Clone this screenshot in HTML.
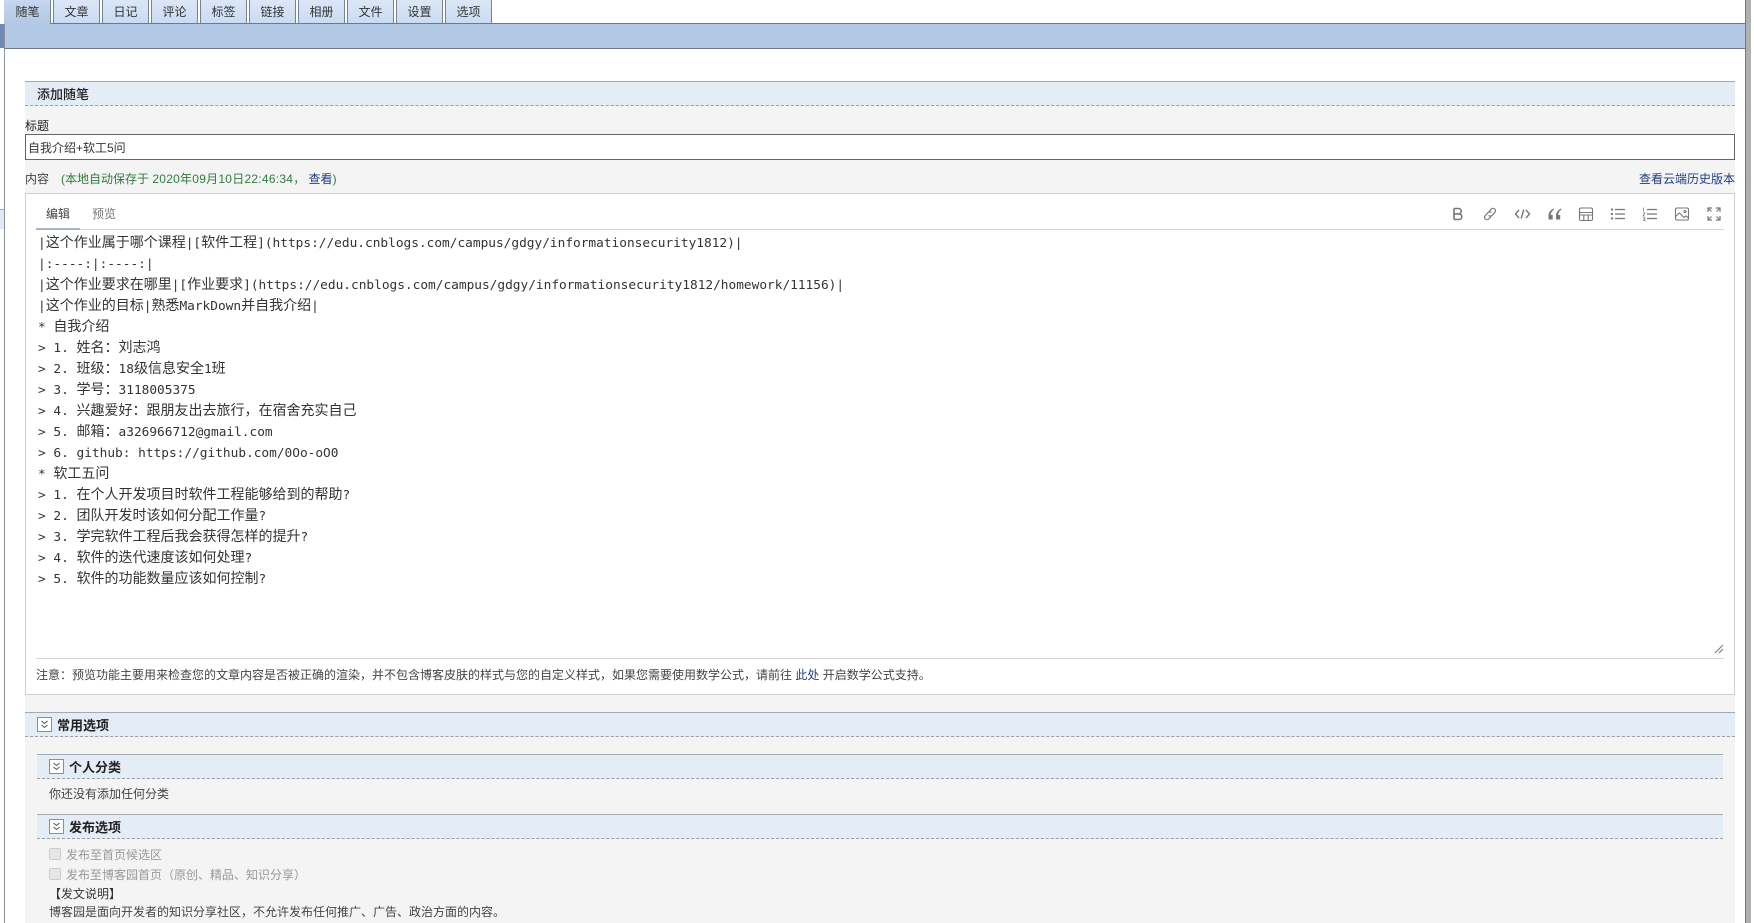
<!DOCTYPE html>
<html lang="zh"><head><meta charset="utf-8"><title>添加随笔</title>
<style>
html,body{margin:0;padding:0;background:#fff;width:1754px;height:923px;overflow:hidden}
body{position:relative;font-family:"Liberation Sans","Noto Sans CJK SC",sans-serif;font-size:12px;color:#333}
.a{position:absolute}
.t{position:absolute;white-space:nowrap;line-height:18px}
.tab{position:absolute;top:0;height:23px;width:45px;background:linear-gradient(#dbe7f7,#cadcf3);border:solid #78838f;border-width:0 1px;text-align:center;line-height:24px;font-size:12px;color:#333;box-sizing:content-box}
.hd{position:absolute;background:#e4ecf6;border-top:1px solid #a3aab2;border-bottom:1px dashed #9aa0a6;box-sizing:border-box}
.ht{position:absolute;font-size:13px;font-weight:500;color:#222;white-space:nowrap;line-height:18px}
.ck{position:absolute;width:15px;height:15px;border:1px solid #8a8f95;background:#fff;box-sizing:border-box}
.ck svg{position:absolute;left:2px;top:2px}
.c{position:absolute;left:38px;white-space:pre;font-size:14px;line-height:21px;height:21px;color:#333}
.c i{font-style:normal;font-family:"DejaVu Sans Mono",monospace;font-size:12.8px}
.cb{position:absolute;left:49px;width:12px;height:12px;background:#e6e6e6;border:1px solid #ccc;border-radius:2px;box-sizing:border-box}
.ic{position:absolute;top:207px}
</style></head><body>
<div class="a" style="left:0;top:24px;width:4px;height:24px;background:#6c8ab5"></div>
<div class="a" style="left:0;top:209px;width:4px;height:20px;background:#dfe8f5;border-top:1px solid #9aa;box-sizing:border-box"></div>
<div class="a" style="left:4px;top:23px;width:1px;height:900px;background:#8d9297"></div>
<div class="a" style="left:5px;top:23px;width:1740px;height:26px;background:#b3c8e5;border-top:1px solid #6f7a86;border-bottom:1px solid #6f7a86;box-sizing:border-box"></div>
<div class="a" style="left:1745px;top:0;width:6px;height:923px;background:#b0b0b0;border-left:1px solid #777;box-sizing:border-box"></div>
<div class="tab" style="left:4px;height:24px;background:linear-gradient(#c6d7ee,#b3c8e5);border-left:0;border-bottom:0;width:45px;text-align:center;z-index:2;padding-left:1px">随笔</div>
<div class="tab" style="left:53px">文章</div>
<div class="tab" style="left:102px">日记</div>
<div class="tab" style="left:151px">评论</div>
<div class="tab" style="left:200px">标签</div>
<div class="tab" style="left:249px">链接</div>
<div class="tab" style="left:298px">相册</div>
<div class="tab" style="left:347px">文件</div>
<div class="tab" style="left:396px">设置</div>
<div class="tab" style="left:445px">选项</div>

<div class="a" style="left:25px;top:105px;width:1710px;height:818px;background:#f4f4f4"></div>
<div class="hd" style="left:25px;top:81px;width:1710px;height:25px"></div>
<div class="ht" style="left:37px;top:85px;margin-top:1px">添加随笔</div>
<div class="t" style="left:25px;top:117px;color:#222">标题</div>
<div class="a" style="left:25px;top:134px;width:1710px;height:26px;background:#fff;border:1px solid #666;box-sizing:border-box"></div>
<div class="t" style="left:28px;top:138px;margin-top:1px;color:#333">自我介绍+软工5问</div>
<div class="t" style="left:25px;top:170px;color:#444">内容</div>
<div class="t" style="left:61px;top:170px;color:#2f7d3a">(本地自动保存于 <span style="letter-spacing:.25px">2020年09月10日22:46:34</span>， <span style="color:#1f3f7f">查看</span>)</div>
<div class="t" style="right:19px;top:170px;color:#1f3f7f">查看云端历史版本</div>

<div class="a" style="left:25px;top:193px;width:1710px;height:502px;background:#fff;border:1px solid #d0d0d0;box-sizing:border-box"></div>
<div class="t" style="left:46px;top:205px;color:#444">编辑</div>
<div class="t" style="left:92px;top:205px;color:#777">预览</div>
<div class="a" style="left:36px;top:229px;width:1688px;height:1px;background:#d4d4d4"></div>
<div class="a" style="left:36px;top:228px;width:44px;height:2px;background:#a7b4c6"></div>

<svg class="ic" style="left:1451px;top:206px" width="14" height="16" viewBox="0 0 14 16" fill="none" stroke="#777" stroke-width="1.6"><path d="M3 2.5v11M3 2.5h4.5a2.6 2.6 0 0 1 0 5.4H3M3 7.9h5a2.8 2.8 0 0 1 0 5.6H3"/></svg>
<svg class="ic" style="left:1482px;top:206px" width="16" height="16" viewBox="0 0 16 16" fill="none" stroke="#777" stroke-width="1.2"><path d="M7 5.5l2.2-2.4a2.4 2.4 0 0 1 3.6 3.3L10 9.4a2.4 2.4 0 0 1-3.4 0M9 10.5l-2.2 2.4a2.4 2.4 0 0 1-3.6-3.3L6 6.6a2.4 2.4 0 0 1 3.4 0"/></svg>
<svg class="ic" style="left:1514px;top:206px" width="17" height="16" viewBox="0 0 17 16" fill="none" stroke="#777" stroke-width="1.4"><path d="M5 4L1.5 8 5 12M12 4l3.5 4L12 12M9.8 3.5L7.2 12.5"/></svg>
<svg class="ic" style="left:1547px;top:206px" width="16" height="16" viewBox="0 0 16 16" fill="#777"><path d="M6.5 2.5C3.5 4 1.5 6.5 1.5 9.5v4h4.2V9H3.6c.2-2.2 1.4-4.2 3.4-5.5zM14 2.5C11 4 9 6.5 9 9.5v4h4.2V9h-2.1c.2-2.2 1.4-4.2 3.4-5.5z"/></svg>
<svg class="ic" style="left:1578px;top:206px" width="16" height="16" viewBox="0 0 16 16" fill="none" stroke="#777" stroke-width="1.1"><rect x="1.5" y="2" width="13" height="12.5" rx="1.5"/><path d="M1.5 6.5h13M1.5 9h13M5.8 9v5.5M10.2 9v5.5"/></svg>
<svg class="ic" style="left:1610px;top:206px" width="16" height="16" viewBox="0 0 16 16" fill="none" stroke="#777" stroke-width="1.2"><path d="M5 3.5h10M5 8h10M5 12.5h10"/><path d="M1 3.5h2M1 8h2M1 12.5h2" stroke-width="2"/></svg>
<svg class="ic" style="left:1642px;top:206px" width="16" height="16" viewBox="0 0 16 16" fill="none" stroke="#777" stroke-width="1.2"><path d="M5 3.5h10M5 8h10M5 12.5h10"/><path d="M1.5 1.5v4M1 7h2l-2 3h2M1 12h2l-1 1 1 1.5H1" stroke-width=".7"/></svg>
<svg class="ic" style="left:1674px;top:206px" width="16" height="16" viewBox="0 0 16 16" fill="none" stroke="#777" stroke-width="1.1"><rect x="1.5" y="2" width="13" height="12" rx="1.5"/><path d="M1.5 10.5L5.5 7l4.5 4.5 2-1.5 2.5 2"/><circle cx="11" cy="5.5" r="1"/></svg>
<svg class="ic" style="left:1706px;top:206px" width="16" height="16" viewBox="0 0 16 16" fill="none" stroke="#777" stroke-width="1.2"><path d="M2 6V2h4M10 2h4v4M14 10v4h-4M6 14H2v-4M2.5 2.5l3 3M13.5 2.5l-3 3M13.5 13.5l-3-3M2.5 13.5l3-3"/></svg>

<div class="c" style="top:232px"><i>|</i>这个作业属于哪个课程<i>|[</i>软件工程<i>](https://edu.cnblogs.com/campus/gdgy/informationsecurity1812)|</i></div>
<div class="c" style="top:253px"><i>|:----:|:----:|</i></div>
<div class="c" style="top:274px"><i>|</i>这个作业要求在哪里<i>|[</i>作业要求<i>](https://edu.cnblogs.com/campus/gdgy/informationsecurity1812/homework/11156)|</i></div>
<div class="c" style="top:295px"><i>|</i>这个作业的目标<i>|</i>熟悉<i>MarkDown</i>并自我介绍<i>|</i></div>
<div class="c" style="top:316px"><i>* </i>自我介绍</div>
<div class="c" style="top:337px"><i>&gt; 1. </i>姓名：刘志鸿</div>
<div class="c" style="top:358px"><i>&gt; 2. </i>班级：<i>18</i>级信息安全<i>1</i>班</div>
<div class="c" style="top:379px"><i>&gt; 3. </i>学号：<i>3118005375</i></div>
<div class="c" style="top:400px"><i>&gt; 4. </i>兴趣爱好：跟朋友出去旅行，在宿舍充实自己</div>
<div class="c" style="top:421px"><i>&gt; 5. </i>邮箱：<i>a326966712@gmail.com</i></div>
<div class="c" style="top:442px"><i>&gt; 6. github: https://github.com/0Oo-oO0</i></div>
<div class="c" style="top:463px"><i>* </i>软工五问</div>
<div class="c" style="top:484px"><i>&gt; 1. </i>在个人开发项目时软件工程能够给到的帮助<i>?</i></div>
<div class="c" style="top:505px"><i>&gt; 2. </i>团队开发时该如何分配工作量<i>?</i></div>
<div class="c" style="top:526px"><i>&gt; 3. </i>学完软件工程后我会获得怎样的提升<i>?</i></div>
<div class="c" style="top:547px"><i>&gt; 4. </i>软件的迭代速度该如何处理<i>?</i></div>
<div class="c" style="top:568px"><i>&gt; 5. </i>软件的功能数量应该如何控制<i>?</i></div>

<svg class="a" style="left:1714px;top:644px" width="10" height="10" viewBox="0 0 10 10" stroke="#777" stroke-width="1" fill="none"><path d="M1 9L9 1M5 9L9 5"/></svg>
<div class="a" style="left:36px;top:658px;width:1688px;height:1px;background:#d4d4d4"></div>
<div class="t" style="left:36px;top:666px;font-size:12px;color:#444">注意：预览功能主要用来检查您的文章内容是否被正确的渲染，并不包含博客皮肤的样式与您的自定义样式，如果您需要使用数学公式，请前往 <span style="color:#1f3f7f">此处</span> 开启数学公式支持。</div>

<div class="hd" style="left:25px;top:712px;width:1710px;height:25px"></div>
<div class="ck" style="left:37px;top:717px"><svg width="9" height="9" viewBox="0 0 9 9" fill="none" stroke="#555" stroke-width="1"><path d="M1.5 1L4.5 3.5 7.5 1M1.5 5L4.5 7.5 7.5 5"/></svg></div>
<div class="ht" style="left:57px;top:717px;font-weight:700">常用选项</div>

<div class="hd" style="left:37px;top:754px;width:1686px;height:25px"></div>
<div class="ck" style="left:49px;top:759px"><svg width="9" height="9" viewBox="0 0 9 9" fill="none" stroke="#555" stroke-width="1"><path d="M1.5 1L4.5 3.5 7.5 1M1.5 5L4.5 7.5 7.5 5"/></svg></div>
<div class="ht" style="left:69px;top:759px;font-weight:700">个人分类</div>
<div class="t" style="left:49px;top:785px;color:#444">你还没有添加任何分类</div>

<div class="hd" style="left:37px;top:814px;width:1686px;height:25px"></div>
<div class="ck" style="left:49px;top:819px"><svg width="9" height="9" viewBox="0 0 9 9" fill="none" stroke="#555" stroke-width="1"><path d="M1.5 1L4.5 3.5 7.5 1M1.5 5L4.5 7.5 7.5 5"/></svg></div>
<div class="ht" style="left:69px;top:819px;font-weight:700">发布选项</div>

<div class="cb" style="top:848px"></div>
<div class="t" style="left:66px;top:846px;color:#999">发布至首页候选区</div>
<div class="cb" style="top:868px"></div>
<div class="t" style="left:66px;top:866px;color:#999">发布至博客园首页（原创、精品、知识分享）</div>
<div class="t" style="left:49px;top:885px;color:#333">【发文说明】</div>
<div class="t" style="left:49px;top:903px;color:#444">博客园是面向开发者的知识分享社区，不允许发布任何推广、广告、政治方面的内容。</div>
</body></html>
